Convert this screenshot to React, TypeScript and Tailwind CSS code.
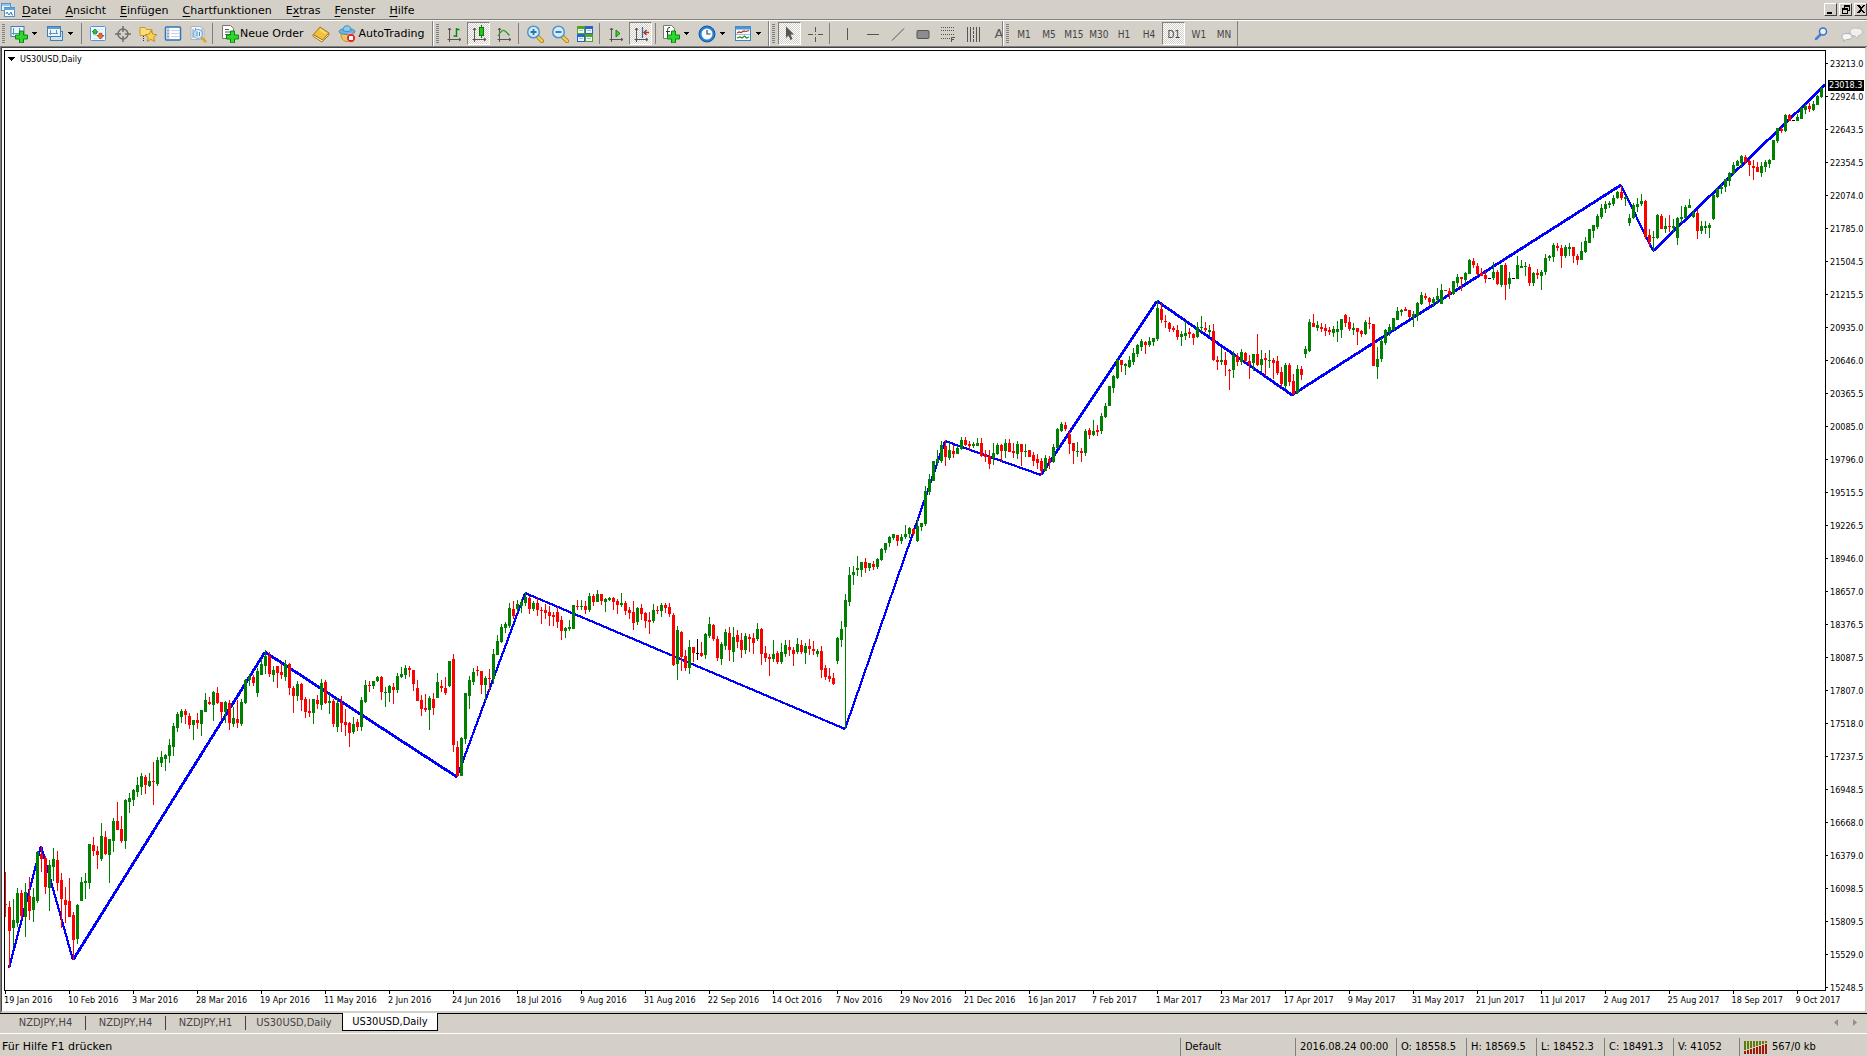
import type { ReactNode } from 'react'
import clsx from 'clsx'

// One token per bar: colour, high, body top, body bottom, low (chart pixels)
const BARS = `
r872,904,905,917 r901,907,931,968 g899,920,928,946 g888,893,923,927 r890,893,916,919 g883,892,917,937 r877,896,911,920 g888,897,910,922
g851,852,901,903 r846,854,859,872 r856,858,887,894 g860,865,888,911 g848,859,867,881 r851,860,883,891 r873,880,899,928 r887,900,905,923
r878,901,917,917 r912,915,940,960 g904,905,939,944 g877,882,901,901 g873,881,883,899 g844,844,883,889 r837,845,851,856 r846,851,855,869
g823,836,859,861 r831,837,854,855 g839,839,855,883 g818,821,841,852 r802,821,830,830 r816,829,841,843 g799,800,841,849 g793,798,802,813
g789,790,800,806 g777,785,792,797 g773,776,787,795 r775,777,785,794 g773,781,786,787 r762,781,782,805 g757,760,784,786 g751,757,763,767
g754,755,759,771 g739,745,756,763 g723,726,747,756 g712,714,728,732 g709,711,717,723 r709,711,715,724 r713,716,725,729 g720,720,725,740
r713,720,723,729 g710,710,724,736 g693,700,712,712 r697,702,704,705 g691,692,705,721 r687,693,703,704 r702,702,712,719 g701,702,712,723
r700,703,723,730 g707,718,724,727 r700,719,723,728 g699,702,724,726 g679,680,703,704 g674,677,680,686 r675,677,683,686 g668,671,693,697
g659,664,675,675 g650,656,666,674 r652,656,674,677 g666,670,675,682 r666,666,673,688 r663,672,675,679 g660,664,677,681 r663,664,688,695
r686,688,696,713 g681,684,696,701 r683,684,700,711 r697,699,712,718 r699,711,713,717 g699,699,713,724 r695,700,704,709 g679,683,705,710
r680,682,703,704 g693,701,703,714 r699,701,724,727 g698,703,727,732 r696,703,723,732 r709,722,725,736 r722,723,733,747 g717,724,732,734
r719,722,727,731 g697,700,727,731 g680,685,702,703 r681,685,686,692 g681,681,686,689 g676,677,681,682 r676,677,692,700 g687,692,693,707
g685,686,693,702 r683,687,690,704 g673,676,690,693 g667,674,677,678 g665,668,675,679 r666,668,670,677 r670,670,684,691 r680,688,701,701
r695,700,709,716 r694,708,710,712 g696,698,710,730 r693,699,708,715 g673,682,698,698 r680,686,688,692 r677,688,693,695 g661,661,686,687
r654,659,745,752 r741,747,776,777 g737,738,776,776 g693,693,739,744 g676,680,696,709 g668,672,682,685 r666,670,671,676 r671,671,685,694
g676,678,685,701 r669,678,679,691 g649,654,679,684 g635,641,655,655 g624,627,642,643 g622,624,628,633 g603,608,626,628 r601,609,616,619
g600,604,609,612 g599,602,606,613 g592,597,603,606 r596,598,609,614 g601,603,609,611 r598,603,610,616 r607,610,611,624 r604,610,613,619
r606,612,616,626 r612,615,617,626 r607,612,622,628 r616,620,631,640 g627,628,631,638 g620,627,629,631 g605,605,629,629 r600,606,607,610
g600,606,607,610 r601,606,610,614 g593,596,610,612 r594,596,602,606 g590,594,602,602 r594,594,601,605 g598,599,602,612 g597,598,600,601
r597,598,602,610 r599,601,605,614 g593,603,605,607 r601,603,611,615 r607,610,613,619 r601,612,623,630 g607,608,622,625 r604,608,614,620
r612,613,621,628 r612,620,622,634 g604,610,621,623 r606,610,611,614 g603,605,611,617 r603,605,608,613 r603,607,614,617 r613,615,665,666
g626,630,664,680 r631,632,657,671 r650,656,668,671 g640,647,668,674 r647,647,653,662 k639,653,654,660 r642,653,656,657 g633,634,655,659
g617,624,636,638 r624,625,639,641 r636,639,658,661 g642,644,659,665 g629,632,646,650 r627,633,650,661 g627,637,652,662 r630,635,642,648
r633,640,650,658 g633,636,650,654 r634,637,639,652 r633,638,643,654 g623,629,639,641 r628,629,654,665 r646,653,658,662 r654,657,659,676
g640,654,659,662 r651,653,662,664 g643,652,662,664 g640,645,654,657 r640,647,650,656 r647,650,654,666 g638,644,652,654 r640,645,652,654
g643,646,653,664 r639,646,649,655 r641,649,651,655 g649,651,654,657 r646,651,670,678 r665,668,677,680 r668,676,679,682 r673,678,684,685
g637,638,661,664 g621,629,640,647 g594,600,627,729 g567,575,602,606 g566,572,575,585 g556,568,570,576 g562,562,570,577 r558,562,568,573
g563,563,568,571 r561,564,567,570 g558,559,567,569 g548,549,560,561 g543,543,550,553 g536,537,543,547 g534,534,538,540 r535,535,541,546
g534,537,541,544 g525,534,537,539 g527,528,534,538 r528,529,534,536 g518,526,541,542 g523,523,527,531 g486,491,524,526 g474,479,492,495
g461,461,481,481 g450,459,462,466 g441,445,461,463 r440,446,457,466 g442,450,458,460 r445,451,454,458 g446,448,454,454 g437,440,449,450
r437,440,445,446 r441,444,446,450 g442,444,446,448 g438,443,446,446 r438,443,456,457 r450,454,457,462 r450,456,464,469 g443,453,458,465
g443,445,454,455 r444,445,451,462 g439,443,451,458 r439,443,452,452 r443,451,453,458 g441,444,454,459 r444,444,452,466 g444,451,452,457
r450,450,457,457 r452,455,461,466 r454,459,463,469 r458,461,471,475 g455,458,471,471 r456,459,462,469 g444,447,462,463 g428,429,448,448
g422,424,431,432 r422,425,429,431 r431,434,444,454 r443,443,451,464 g442,451,452,457 r448,451,453,462 g429,431,453,456 r428,430,435,439
g420,431,435,436 r425,430,432,436 g413,416,431,434 g403,406,417,418 g386,386,406,406 g375,376,388,393 g359,360,378,379 r360,360,365,372
g363,364,366,375 g356,360,367,368 g348,353,362,365 g344,345,354,357 g339,341,347,351 r341,342,345,354 g337,341,345,347 g338,338,342,346
g300,308,339,341 r303,309,320,323 r315,321,322,328 r322,323,329,332 r326,328,330,332 r325,330,337,340 g331,334,337,346 g321,333,336,340
r328,332,334,338 r333,334,338,345 g322,327,337,338 g316,327,328,332 r322,328,330,332 g325,330,332,336 r324,331,360,361 r356,360,362,370
g348,360,362,365 r352,360,365,376 r369,370,371,390 g351,355,370,378 r353,356,362,366 g349,352,362,365 r352,353,361,362 r355,361,364,379
g354,354,363,371 r334,354,365,366 g350,359,365,372 r353,358,360,376 g350,360,361,368 r358,360,363,379 r356,361,373,375 r367,372,384,387
g363,365,386,389 r363,365,382,386 r374,381,394,395 g365,369,393,394 r366,369,375,380 g346,349,354,358 g319,322,351,352 r314,323,327,327
g321,325,328,331 r323,327,329,332 r324,328,331,336 r327,330,332,335 g326,329,333,337 g321,329,332,342 g319,319,330,338 r314,315,323,327
r317,322,329,331 g323,328,330,335 r328,328,332,345 r330,331,334,337 g320,322,334,335 r317,323,324,329 r324,324,366,366 g347,359,367,379
g338,341,359,362 g329,330,343,345 g324,327,332,336 g318,318,330,330 g307,311,320,320 g309,310,312,316 r307,309,311,311 r310,310,317,318
g311,314,317,327 g302,303,316,321 g292,295,304,305 r293,296,298,300 r297,298,302,306 g297,299,303,307 g288,296,300,304 g284,290,304,304
r290,290,291,291 r288,291,294,299 g281,281,294,295 g274,277,283,287 r277,277,279,291 g272,273,280,283 g259,260,274,274 r258,261,265,268
r263,266,274,276 r268,273,276,276 r271,275,279,283 k278,278,279,279 g262,272,278,280 r270,272,284,285 g265,265,285,287 r263,265,285,300
g272,278,284,289 k278,278,279,279 g256,265,279,279 g260,266,268,268 g262,266,267,276 r264,267,283,286 g272,273,283,286 r269,273,275,279
g270,272,276,290 g254,258,272,275 g255,256,258,261 g243,245,257,262 r243,246,248,251 r245,248,256,268 g245,247,256,258 g243,247,249,256
r247,247,256,263 r254,256,260,265 g242,251,260,260 g237,241,252,253 g229,229,243,243 g225,225,231,238 g214,216,227,229 g204,208,217,219
g201,204,209,213 g201,203,205,208 g195,198,204,206 g191,192,198,199 r186,192,198,200 g196,197,199,206 g214,218,223,226 g203,205,218,219
g198,204,207,212 g194,201,204,206 r200,201,237,239 r229,235,242,247 g231,237,238,251 g214,215,238,239 r214,216,229,229 g218,226,229,233
r215,226,227,232 g219,226,228,233 g217,218,238,245 g206,217,219,223 g205,207,218,218 g199,205,208,208 g210,213,217,218 r210,213,231,239
g221,226,231,234 g221,226,228,234 g223,225,228,238 g195,195,219,220 g188,189,197,198 g184,187,189,194 g179,179,187,192 g172,173,181,186
g162,165,174,174 g160,161,166,166 g155,156,163,167 r155,157,162,164 r160,161,165,176 r160,166,168,180 r162,167,172,172 g162,166,173,177
g160,162,167,172 g159,160,164,168 g140,140,160,160 g128,128,141,143 r127,129,131,133 g114,115,131,132 r114,115,121,121 k120,120,121,121
g114,117,121,121 g107,108,119,119 g104,106,110,114 r103,106,109,112 g101,104,110,111 g95,96,105,105 g87,88,97,98`
  .trim()
  .split(/\s+/)
  .map((token, i) => {
    const [high, top, bottom, low] = token.slice(1).split(',').map(Number)
    return { kind: token[0], x: 5 + i * 4, high, top, bottom, low }
  })

const BAR_FILL: Record<string, string> = { r: '#ff0000', g: '#008000', k: '#000000' }

const ZIGZAG = [
  [9, 968], [41, 846], [73, 960], [265, 652], [457, 777], [525, 593], [845, 729],
  [945, 441], [1041, 475], [1157, 301], [1292, 395], [1621, 185], [1653, 251], [1825, 85],
]

const PRICES = [
  '23213.0', '22924.0', '22643.5', '22354.5', '22074.0', '21785.0', '21504.5', '21215.5', '20935.0', '20646.0',
  '20365.5', '20085.0', '19796.0', '19515.5', '19226.5', '18946.0', '18657.0', '18376.5', '18087.5', '17807.0',
  '17518.0', '17237.5', '16948.5', '16668.0', '16379.0', '16098.5', '15809.5', '15529.0', '15248.5',
]

const DATES = [
  '19 Jan 2016', '10 Feb 2016', '3 Mar 2016', '28 Mar 2016', '19 Apr 2016', '11 May 2016', '2 Jun 2016',
  '24 Jun 2016', '18 Jul 2016', '9 Aug 2016', '31 Aug 2016', '22 Sep 2016', '14 Oct 2016', '7 Nov 2016',
  '29 Nov 2016', '21 Dec 2016', '16 Jan 2017', '7 Feb 2017', '1 Mar 2017', '23 Mar 2017', '17 Apr 2017',
  '9 May 2017', '31 May 2017', '21 Jun 2017', '11 Jul 2017', '2 Aug 2017', '25 Aug 2017', '18 Sep 2017', '9 Oct 2017',
]

const MENUS = [
  ['', 'D', 'atei'],
  ['', 'A', 'nsicht'],
  ['', 'E', 'infügen'],
  ['', 'C', 'hartfunktionen'],
  ['E', 'x', 'tras'],
  ['', 'F', 'enster'],
  ['', 'H', 'ilfe'],
]

const TIMEFRAMES = ['M1', 'M5', 'M15', 'M30', 'H1', 'H4', 'D1', 'W1', 'MN']

const TABS = ['NZDJPY,H4', 'NZDJPY,H4', 'NZDJPY,H1', 'US30USD,Daily', 'US30USD,Daily']

const STATUS = [
  { text: 'Default', width: 'w-[115px]' },
  { text: '2016.08.24 00:00', width: 'w-[101px]' },
  { text: 'O: 18558.5', width: 'w-[70px]' },
  { text: 'H: 18569.5', width: 'w-[70px]' },
  { text: 'L: 18452.3', width: 'w-[68px]' },
  { text: 'C: 18491.3', width: 'w-[69px]' },
  { text: 'V: 41052', width: 'w-[66px]' },
]

const CONDENSED = "font-['DejaVu_Sans_Condensed','DejaVu_Sans',sans-serif]"

function Icon({ children, w = 18 }: { children: ReactNode; w?: number }) {
  return (
    <svg width={w} height={18} viewBox={`0 0 ${w} 18`} className="shrink-0" aria-hidden="true">
      {children}
    </svg>
  )
}

const Plus = () => (
  <path d="M9.5 6h4v4h4v4h-4v4h-4v-4h-4v-4h4z" fill="#2fd62f" stroke="#0a8a0a" />
)

function NewChartIcon() {
  return (
    <Icon>
      <rect x="1" y="1.5" width="13" height="10" fill="#eef6fc" stroke="#3d7fb8" />
      <path d="M3.5 3v7M2 8.5h9M9.5 3v4" stroke="#5d93bf" fill="none" />
      <Plus />
    </Icon>
  )
}

function ProfilesIcon() {
  return (
    <Icon>
      <rect x="4.5" y="6.5" width="12" height="9" fill="#cfe3f3" stroke="#3d7fb8" />
      <rect x="1.5" y="1.5" width="13" height="10" fill="#eef6fc" stroke="#3d7fb8" />
      <path d="M2 3h12" stroke="#5b9fd6" strokeWidth="2" />
      <path d="M4.5 5v5M3 8.5h9M10.5 5v4" stroke="#5d93bf" fill="none" />
    </Icon>
  )
}

function MarketWatchIcon() {
  return (
    <Icon>
      <rect x="1.5" y="1.5" width="15" height="14" rx="1" fill="#f4faff" stroke="#4a9ad4" />
      <path d="M4 4.5h10M4 7.5h10M4 10.5h10M4 13.5h10" stroke="#d5e4ee" />
      <path d="M6 4l3 3H7.5v2h-3V7H3z" fill="#2fbf3f" stroke="#0b7d1b" strokeWidth=".7" />
      <path d="M11.5 14l3.5-3.500h-2v-2h-3v2H8z" fill="#ef6a33" stroke="#a9300a" strokeWidth=".7" />
    </Icon>
  )
}

function DataWindowIcon() {
  return (
    <Icon>
      <circle cx="9" cy="9" r="5" fill="none" stroke="#6d6d6d" strokeWidth="1.5" />
      <path d="M9 1v6M9 11v6M1 9h6M11 9h6" stroke="#6d6d6d" strokeWidth="1.5" />
    </Icon>
  )
}

function NavigatorIcon() {
  return (
    <Icon>
      <path d="M1 2.5h5l1.5 2H13v6H1z" fill="#f9dd7c" stroke="#c79a2a" />
      <path d="M4.5 11v6" stroke="#333" strokeDasharray="1 1" />
      <path d="M12 5.5l1.8 3.7 4 .5-3 2.7.8 4-3.6-2-3.6 2 .8-4-3-2.7 4-.5z" fill="#fbd24a" stroke="#b57f13" strokeWidth=".8" />
    </Icon>
  )
}

function TerminalIcon() {
  return (
    <Icon>
      <rect x="1.5" y="2" width="15" height="13" rx="1" fill="#fff" stroke="#2d74b5" strokeWidth="1.5" />
      <rect x="2.5" y="3" width="3" height="11" fill="#b9d3ea" />
      <path d="M4 5v1M4 8v1M4 11v1" stroke="#d33" />
      <path d="M7 5.5h8M7 8.5h8M7 11.5h8" stroke="#c5cdf0" />
    </Icon>
  )
}

function TesterIcon() {
  return (
    <Icon>
      <path d="M2 1.5h9l4 3v10H2z" fill="#f3f7fa" stroke="#aab4bc" />
      <path d="M4 4v9M6.5 3v8M13 4v4" stroke="#6f9ac2" />
      <path d="M12.5 12.5l4 4" stroke="#d8a92b" strokeWidth="2.5" strokeLinecap="round" />
      <circle cx="9" cy="9" r="4.5" fill="#d6ebf9" fillOpacity=".8" stroke="#7ea9cb" strokeWidth="1.2" />
      <path d="M8 6.5v5M10.5 7v4" stroke="#4d86bb" />
    </Icon>
  )
}

function NewOrderIcon() {
  return (
    <Icon>
      <path d="M1.5.5h8l3 3v10h-11z" fill="#fff" stroke="#777" />
      <path d="M4 4.5h4M4 7h6M4 9.5h6" stroke="#555" />
      <Plus />
    </Icon>
  )
}

function BookIcon() {
  return (
    <Icon>
      <path d="M1 9.5c-.5 1.500 0 2 1 2.500l8 5 7-7V8l-6.500 6.500z" fill="#fff3cf" stroke="#a97412" />
      <path d="M1.500 9.5L8 2l9 6-6.500 7z" fill="#f2c141" stroke="#a97412" />
      <path d="M8 4.5l6 4" stroke="#fbe394" strokeWidth="1.5" />
    </Icon>
  )
}

function AutoTradingIcon() {
  return (
    <Icon>
      <path d="M3 8c0 6 2.5 8.5 6 8.5s6-3 6-8.5z" fill="#f4c64e" stroke="#b78218" strokeWidth=".8" />
      <ellipse cx="9" cy="6.5" rx="8" ry="3" fill="#6bb6e3" stroke="#317ead" strokeWidth=".8" />
      <path d="M5 5.5C5 2 6.5.8 9 .8s4 1.2 4 4.7c-2 1.2-6 1.2-8 0z" fill="#8ccbee" stroke="#317ead" strokeWidth=".8" />
      <circle cx="13" cy="13" r="4.5" fill="#dd2a1b" stroke="#fff" strokeWidth=".5" />
      <rect x="11" y="11" width="4" height="4" rx=".5" fill="#fff" />
    </Icon>
  )
}

const Axes = () => (
  <path d="M4.5 3v14M2.5 14.5h13M3 5l1.5-2L6 5M14 13l2 1.5-2 1.5" fill="none" stroke="#555" />
)

function BarChartIcon() {
  return (
    <Icon>
      <Axes />
      <path d="M11.5 3v9M11.5 4.5h3M8.5 11h3" stroke="#0a8a0a" strokeWidth="1.5" fill="none" />
    </Icon>
  )
}

function CandleIcon() {
  return (
    <Icon>
      <Axes />
      <path d="M11.5 0v13" stroke="#0a7a0a" />
      <rect x="9.5" y="2.5" width="4" height="8" fill="#22c322" stroke="#0a7a0a" />
    </Icon>
  )
}

function LineChartIcon() {
  return (
    <Icon>
      <Axes />
      <path d="M3 11c3-5 5-6.5 7-5 2 1.5 3 3 4.5 4.5" fill="none" stroke="#2c9b2c" strokeWidth="1.3" />
    </Icon>
  )
}

function ZoomIcon({ plus }: { plus?: boolean }) {
  return (
    <Icon>
      <path d="M11 11l5 5" stroke="#a97b12" strokeWidth="4" strokeLinecap="round" />
      <path d="M11 11l5 5" stroke="#f3cc4b" strokeWidth="2.5" strokeLinecap="round" />
      <circle cx="7.5" cy="7" r="5.8" fill="#d3ecfb" stroke="#4c97d0" strokeWidth="1.5" />
      <path d={plus ? 'M4.5 7h6M7.5 4v6' : 'M4.5 7h6'} stroke="#33719f" strokeWidth="1.8" />
    </Icon>
  )
}

function TileIcon() {
  return (
    <Icon>
      <rect x="1" y="1" width="8" height="8" fill="#4fa51f" />
      <rect x="9" y="1" width="8" height="8" fill="#2a63c9" />
      <rect x="1" y="9" width="8" height="8" fill="#2a63c9" />
      <rect x="9" y="9" width="8" height="8" fill="#4fa51f" />
      <path d="M2 4h6v4H2zM10 4h6v4h-6zM2 12h6v4H2zM10 12h6v4h-6z" fill="#eef5ff" />
      <path d="M3 5.5h4M11 5.5h4M3 13.5h4M11 13.5h4" stroke="#9db5d8" />
    </Icon>
  )
}

function AutoScrollIcon() {
  return (
    <Icon>
      <Axes />
      <path d="M9 5l4 3.5L9 12z" fill="#3fce3f" stroke="#0a8a0a" />
    </Icon>
  )
}

function ChartShiftIcon() {
  return (
    <Icon>
      <Axes />
      <path d="M10.5 2v11" stroke="#2d6fa8" strokeWidth="1.3" />
      <path d="M12 7.5h5M14.5 5L12 7.5l2.5 2.5" stroke="#b5351c" strokeWidth="1.5" fill="none" />
    </Icon>
  )
}

function IndicatorIcon() {
  return (
    <Icon>
      <path d="M1.5.5h8l3 3v10h-11z" fill="#fff" stroke="#777" />
      <path d="M8 2.5c-2-.5-2.5 1-2.5 3v5M4 6.5h4" stroke="#333" fill="none" />
      <Plus />
    </Icon>
  )
}

function ClockIcon() {
  return (
    <Icon>
      <circle cx="9" cy="9" r="8" fill="#2a7fd4" stroke="#14559c" />
      <circle cx="9" cy="9" r="5.5" fill="#f4faff" />
      <path d="M9 5v4h3.5" stroke="#444" fill="none" strokeWidth="1.2" />
    </Icon>
  )
}

function TemplateIcon() {
  return (
    <Icon>
      <rect x="1.5" y="1.5" width="15" height="14" fill="#f8fbfe" stroke="#3f83bd" />
      <rect x="1.5" y="1.5" width="15" height="3" fill="#4b95d4" />
      <path d="M3 8l2-1 2 .5 3-1.5 2 .5 3-1" stroke="#a4361d" fill="none" strokeWidth="1.2" />
      <path d="M2 9.5h14" stroke="#9fc1dd" />
      <path d="M3 13l3-1 2 1 2.5-2 2 2 2.5-1" stroke="#2a8f2a" fill="none" strokeWidth="1.2" />
    </Icon>
  )
}

const LINE_TOOLS = [
  { label: 'Vertical line', shape: <path d="M8.5 3v12" /> },
  { label: 'Horizontal line', shape: <path d="M3 9.5h12" /> },
  { label: 'Trendline', shape: <path d="M3 15.5L15 3.5" /> },
  { label: 'Rectangle', shape: <rect x="3" y="5.5" width="12" height="8" rx="1" fill="#8c8c8c" /> },
  {
    label: 'Fibonacci',
    shape: (
      <>
        <path d="M2 2.5h14M2 5.5h14M2 9.5h14M2 13.5h9" strokeDasharray="1 1" />
        <path d="M12.5 17v-4.500H16M12.5 14.5H15" />
      </>
    ),
  },
  {
    label: 'Cycle lines',
    shape: (
      <>
        <path d="M3.5 2v15M6.5 2v15M12.5 2v15M15.5 2v15" />
        <path d="M9.5 2v15" strokeDasharray="3 1" />
      </>
    ),
  },
]

function ToolButton({ label, active, children }: { label: string; active?: boolean; children: ReactNode }) {
  return (
    <button
      type="button"
      aria-label={label}
      className={clsx(
        'mr-[2px] flex h-[23px] w-[23px] shrink-0 items-center justify-center',
        active &&
          'border border-t-[#808080] border-l-[#808080] border-r-white border-b-white bg-[repeating-conic-gradient(#ffffff_0_25%,#d4d0c8_0_50%)] bg-[length:2px_2px]',
      )}
    >
      {children}
    </button>
  )
}

function DropButton({ label, children }: { label: string; children: ReactNode }) {
  return (
    <button type="button" aria-label={label} className="flex h-[23px] w-9 shrink-0 items-center gap-[2px] pl-[2px]">
      {children}
      <svg width="7" height="4" viewBox="0 0 7 4" shapeRendering="crispEdges">
        <path d="M1 0h6L4 3z" fill="#000" />
      </svg>
    </button>
  )
}

const Sep = ({ wide }: { wide?: boolean }) => (
  <div className={clsx('flex h-[21px] shrink-0 pl-px', wide ? 'w-2' : 'w-[6px]')}>
    <div className="w-px bg-[#808080]" />
  </div>
)

function Group({ children, first }: { children: ReactNode; first?: boolean }) {
  return (
    <div className={clsx('flex h-[25px] shrink-0 items-center border-r border-r-[#808080]', !first && 'border-l border-l-white')}>
      <div className="mr-[3px] ml-[2px] h-[19px] w-[3px] shrink-0 bg-[repeating-linear-gradient(#808080_0_1px,#d4d0c8_1px_2px)]" />
      {children}
    </div>
  )
}

function MenuBar() {
  return (
    <header className="flex h-5 shrink-0 items-center justify-between border-b border-[#808080]">
      <nav className="flex items-center">
        <svg width="16" height="16" viewBox="0 0 16 16" className="mr-[6px]" aria-hidden="true">
          <rect x="1.5" y="1.5" width="9" height="7" fill="#eaf4fc" stroke="#4f93cc" />
          <path d="M1 3h10" stroke="#4f93cc" />
          <rect x="4.5" y="5.5" width="10" height="9" fill="#fff" stroke="#4f93cc" />
          <path d="M4 7h11" stroke="#5ca4df" strokeWidth="2" />
          <path d="M6 12l1-2 2 3 2-3 1 3h1" stroke="#3c7fb8" fill="none" />
        </svg>
        <div className="flex gap-[14px] pt-[3px]">
          {MENUS.map(([pre, key, rest]) => (
            <button key={key} type="button">
              {pre}
              <u className="underline-offset-2">{key}</u>
              {rest}
            </button>
          ))}
        </div>
      </nav>
      <div className="flex gap-[2px]">
        {['Minimieren', 'Wiederherstellen', 'Schließen'].map((label, i) => (
          <button
            key={label}
            type="button"
            aria-label={label}
            className="h-[13px] w-[13px] border border-t-white border-r-[#404040] border-b-[#404040] border-l-white"
          >
            <svg width="11" height="11" viewBox="0 0 11 11" shapeRendering="crispEdges">
              {i === 0 && <path d="M2 8h5v2H2z" />}
              {i === 1 && <path d="M4 1h6v6H8V6h1V3H5v1H4zM2 4h6v6H2zM3 6v3h4V6z" fillRule="evenodd" />}
              {i === 2 && <path d="M2 1h2l2 2 2-2h2L7 5l3 4H8L6 7 4 9H2l3-4z" />}
            </svg>
          </button>
        ))}
      </div>
    </header>
  )
}

function Toolbar() {
  return (
    <div className="flex h-[26px] shrink-0 items-center border-t border-white">
      <Group first>
        <DropButton label="New chart"><NewChartIcon /></DropButton>
        <DropButton label="Profiles"><ProfilesIcon /></DropButton>
        <Sep />
        <ToolButton label="Market watch"><MarketWatchIcon /></ToolButton>
        <ToolButton label="Data window"><DataWindowIcon /></ToolButton>
        <ToolButton label="Navigator"><NavigatorIcon /></ToolButton>
        <ToolButton label="Terminal"><TerminalIcon /></ToolButton>
        <ToolButton label="Strategy tester"><TesterIcon /></ToolButton>
        <Sep />
        <button type="button" className="flex items-center gap-px pr-[6px] pl-1 whitespace-nowrap">
          <NewOrderIcon />
          Neue Order
        </button>
        <ToolButton label="MetaEditor"><BookIcon /></ToolButton>
        <button type="button" className="flex items-center gap-[3px] pr-2 pl-[3px] whitespace-nowrap">
          <AutoTradingIcon />
          AutoTrading
        </button>
      </Group>
      <Group>
        <ToolButton label="Bar chart"><BarChartIcon /></ToolButton>
        <ToolButton label="Candlesticks" active><CandleIcon /></ToolButton>
        <ToolButton label="Line chart"><LineChartIcon /></ToolButton>
        <Sep />
        <ToolButton label="Zoom in"><ZoomIcon plus /></ToolButton>
        <ToolButton label="Zoom out"><ZoomIcon /></ToolButton>
        <ToolButton label="Tile windows"><TileIcon /></ToolButton>
        <Sep />
        <ToolButton label="Auto scroll"><AutoScrollIcon /></ToolButton>
        <ToolButton label="Chart shift" active><ChartShiftIcon /></ToolButton>
        <Sep />
        <DropButton label="Indicators"><IndicatorIcon /></DropButton>
        <DropButton label="Periods"><ClockIcon /></DropButton>
        <DropButton label="Templates"><TemplateIcon /></DropButton>
      </Group>
      <Group>
        <ToolButton label="Cursor" active>
          <Icon>
            <path d="M5 1.5l8 8H9.5l2 4.5-2 1-2-4.5L5 13z" fill="#555" />
          </Icon>
        </ToolButton>
        <ToolButton label="Crosshair">
          <Icon>
            <path d="M9.5 2v5M9.5 12v5M2 9.5h5M12 9.5h5M9 9.5h1" stroke="#555" />
          </Icon>
        </ToolButton>
        <Sep wide />
        {LINE_TOOLS.map(({ label, shape }) => (
          <ToolButton key={label} label={label}>
            <Icon>
              <g stroke="#555" fill="none">{shape}</g>
            </Icon>
          </ToolButton>
        ))}
        <button type="button" className="w-4 overflow-hidden pl-2 text-left text-[13px] text-[#555]">
          A
        </button>
      </Group>
      <Group>
        {TIMEFRAMES.map((tf) => (
          <ToolButton key={tf} label={tf} active={tf === 'D1'}>
            <span className={clsx(CONDENSED, 'pt-[2px] text-[10px] text-[#444]')}>{tf}</span>
          </ToolButton>
        ))}
      </Group>
      <div className="ml-auto flex items-center gap-3 pr-1">
        <button type="button" aria-label="Search">
          <Icon w={16}>
            <path d="M3 14l4-4" stroke="#4a7fd6" strokeWidth="2.5" strokeLinecap="round" />
            <circle cx="10" cy="6.5" r="3.5" fill="#e8f3fc" stroke="#3f6fc6" strokeWidth="1.5" />
          </Icon>
        </button>
        <button type="button" aria-label="Chat">
          <Icon w={22}>
            <path d="M15 3c-4 0-6 1.5-6 4s2 4 5 4l3 3v-3.300c3-.3 4.500-2 4.500-3.700 0-2.500-2-4-6.500-4z" fill="#efefef" stroke="#bbb" />
            <path d="M6 8.5c-3.500 0-5 1-5 3 0 1.500 1 2.500 2 3l-.5 2 3-2c4 0 5.500-1 5.500-3s-2-3-5-3z" fill="#f6f6f6" stroke="#b0b0b0" />
          </Icon>
        </button>
      </div>
    </div>
  )
}

function PlotArea() {
  return (
    <div className="relative min-h-0 border border-black">
      <svg viewBox="5 51 1820 939" preserveAspectRatio="none" className="absolute inset-0 h-full w-full" shapeRendering="crispEdges">
        <g stroke="#0000ff">
          {ZIGZAG.slice(1).map(([x, y], i) => {
            const [px, py] = ZIGZAG[i]
            const slope = Math.abs((y - py) / (x - px))
            return <line key={x} x1={px} y1={py} x2={x} y2={y} strokeWidth={slope > 0.5 && slope < 2 ? 2.8 : 2.2} />
          })}
        </g>
        {BARS.map((b) => (
          <g key={b.x} fill={BAR_FILL[b.kind]}>
            <rect x={b.x} y={b.high} width={1} height={b.low - b.high} />
            <rect x={b.x - 1} y={b.top} width={3} height={b.bottom - b.top} />
          </g>
        ))}
      </svg>
      <div className={clsx(CONDENSED, 'absolute top-[2px] left-[3px] flex items-center gap-[5px] text-[9px] leading-3')}>
        <svg width="7" height="4" viewBox="0 0 7 4" shapeRendering="crispEdges">
          <path d="M0 0h7L3.5 4z" />
        </svg>
        US30USD,Daily
      </div>
    </div>
  )
}

function Chart() {
  return (
    <main className="flex min-h-0 flex-1 border-t border-l border-[#808080]">
      <div className="mr-px mb-px grid min-w-0 flex-1 grid-cols-[minmax(0,1fr)_39px] grid-rows-[minmax(0,1fr)_20px] border-t border-r border-b border-l border-t-[#404040] border-r-[#d4d0c8] border-b-[#d4d0c8] border-l-[#404040] bg-white pt-[2px] pl-[2px]">
        <PlotArea />
        <ul className={clsx(CONDENSED, 'relative row-span-2 flex flex-col justify-between pt-[7px] pb-[18px] text-[9px]')}>
          {PRICES.map((price) => (
            <li key={price} className="flex h-3 items-center gap-[2px] pt-px leading-3">
              <span className="h-px w-[2px] shrink-0 bg-black" />
              {price}
            </li>
          ))}
          <li className="absolute top-[30px] left-[2px] h-[11px] w-9 bg-black pl-px leading-[11px] text-white">23018.3</li>
        </ul>
        <ul className={clsx(CONDENSED, 'flex text-[9px]')}>
          {DATES.map((date) => (
            <li key={date} className="shrink-0 whitespace-nowrap" style={{ width: `${(64 / 1822) * 100}%` }}>
              <div className="ml-px h-[3px] w-px bg-black" />
              <div className="leading-3">{date}</div>
            </li>
          ))}
        </ul>
      </div>
    </main>
  )
}

function ChartTabs() {
  return (
    <div className={clsx(CONDENSED, 'flex h-5 shrink-0 items-start border-t border-black pl-[6px]')}>
      {TABS.map((tab, i) => {
        const active = i === TABS.length - 1
        return (
          <button
            key={i}
            type="button"
            className={clsx(
              'flex h-[18px] items-center justify-center',
              i < 3 ? 'w-20' : 'w-24',
              active ? '-mt-px border-x border-b border-black bg-white text-black' : 'text-[#444]',
            )}
          >
            <span className="flex-1 text-center">{tab}</span>
            {i < 3 && <span className="h-[14px] w-px bg-[#404040]" />}
          </button>
        )
      })}
      <div className="mt-[5px] mr-[9px] ml-auto flex gap-[14px]">
        <button type="button" aria-label="Scroll left">
          <svg width="5" height="7" viewBox="0 0 5 7"><path d="M4 0v7L0 3.5z" fill="#909090" /></svg>
        </button>
        <button type="button" aria-label="Scroll right">
          <svg width="5" height="7" viewBox="0 0 5 7"><path d="M0 0v7l4-3.5z" fill="#909090" /></svg>
        </button>
      </div>
    </div>
  )
}

function StatusBar() {
  return (
    <footer className="flex h-[23px] shrink-0 items-end border-t border-white">
      <span className="flex-1 pl-[2px] leading-[18px]">Für Hilfe F1 drücken</span>
      <div className={clsx(CONDENSED, 'flex')}>
        {STATUS.map(({ text, width }) => (
          <div key={text} className={clsx('h-[18px] border-l border-[#808080] pl-1 leading-[18px] whitespace-nowrap', width)}>
            {text}
          </div>
        ))}
        <div className="flex h-[18px] w-[128px] items-center gap-1 border-l border-[#808080] pl-1">
          <svg width="24" height="13" viewBox="0 0 24 13" shapeRendering="crispEdges" aria-hidden="true">
            {Array.from({ length: 8 }, (_, i) => (
              <g key={i}>
                <rect x={i * 3} y={0} width={2} height={9 - i} fill="#5f7d0a" />
                <rect x={i * 3} y={10 - i} width={2} height={3 + i} fill="#a01808" />
              </g>
            ))}
          </svg>
          567/0 kb
        </div>
      </div>
    </footer>
  )
}

export default function App() {
  return (
    <div className="flex h-screen flex-col overflow-hidden bg-[#d4d0c8] font-['DejaVu_Sans',sans-serif] text-[11px] leading-4 text-black">
      <MenuBar />
      <Toolbar />
      <Chart />
      <ChartTabs />
      <StatusBar />
    </div>
  )
}
